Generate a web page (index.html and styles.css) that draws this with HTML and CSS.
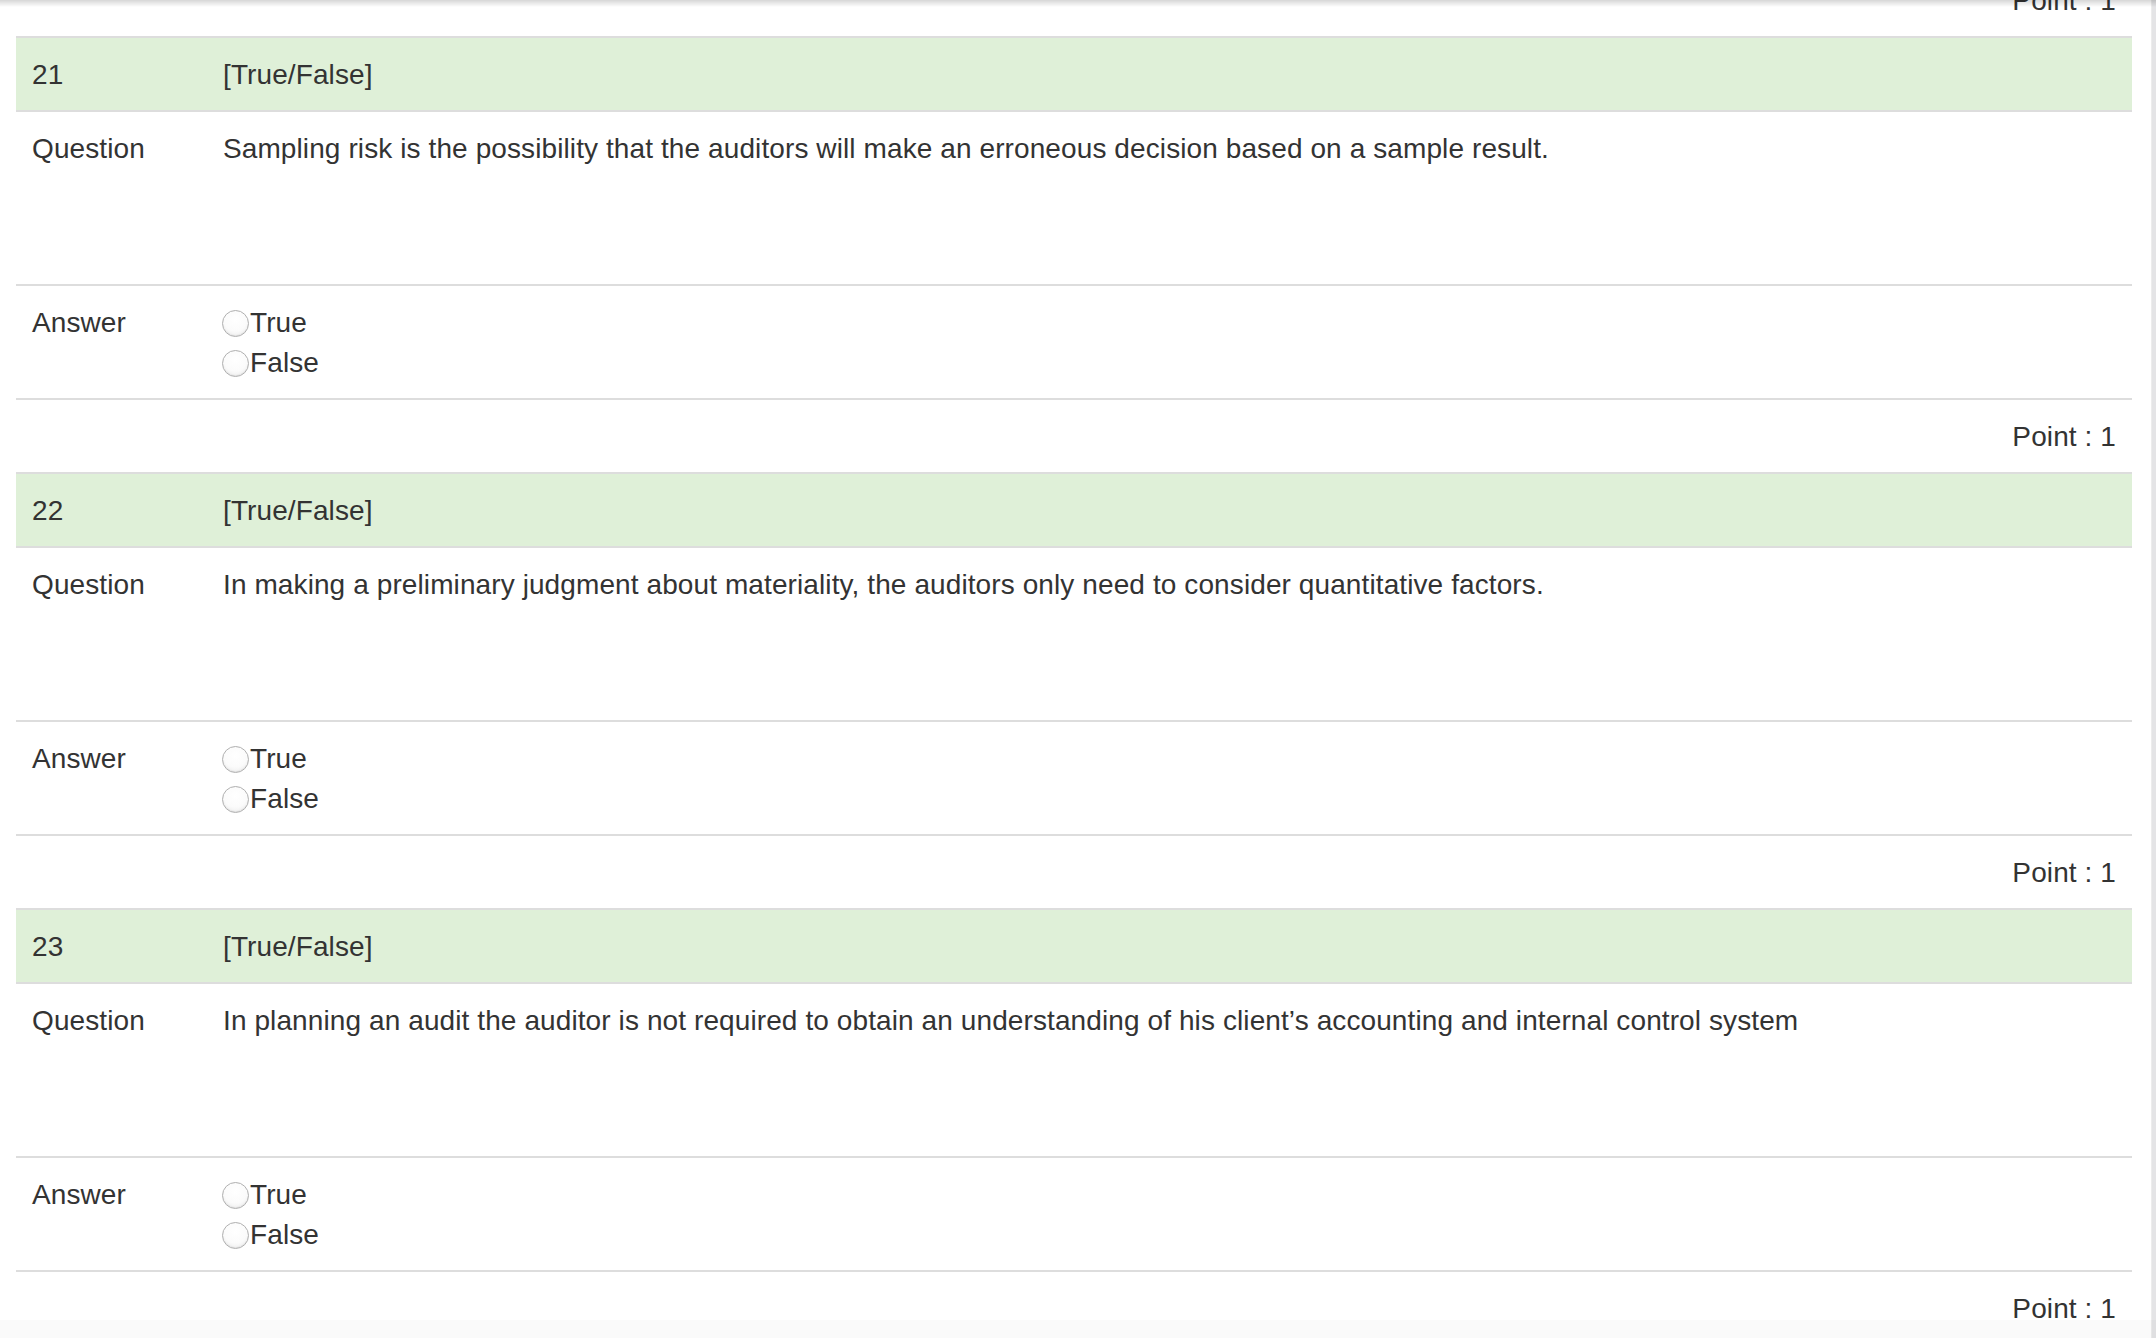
FILE: index.html
```html
<!DOCTYPE html>
<html>
<head>
<meta charset="utf-8">
<link rel="stylesheet" href="styles.css">
</head>
<body>
<div class="topshade"></div>
<div class="page">
  <div class="point first">Point : 1</div>

  <table class="qtable">
    <tr class="head"><td class="lbl">21</td><td>[True/False]</td></tr>
    <tr class="qrow"><td class="lbl">Question</td><td>Sampling risk is the possibility that the auditors will make an erroneous decision based on a sample result.</td></tr>
    <tr class="arow"><td class="lbl">Answer</td><td>
      <label class="opt"><span class="radio"></span>True</label>
      <label class="opt"><span class="radio"></span>False</label>
    </td></tr>
  </table>
  <div class="point">Point : 1</div>

  <table class="qtable">
    <tr class="head"><td class="lbl">22</td><td>[True/False]</td></tr>
    <tr class="qrow"><td class="lbl">Question</td><td>In making a preliminary judgment about materiality, the auditors only need to consider quantitative factors.</td></tr>
    <tr class="arow"><td class="lbl">Answer</td><td>
      <label class="opt"><span class="radio"></span>True</label>
      <label class="opt"><span class="radio"></span>False</label>
    </td></tr>
  </table>
  <div class="point">Point : 1</div>

  <table class="qtable">
    <tr class="head"><td class="lbl">23</td><td>[True/False]</td></tr>
    <tr class="qrow"><td class="lbl">Question</td><td>In planning an audit the auditor is not required to obtain an understanding of his client’s accounting and internal control system</td></tr>
    <tr class="arow"><td class="lbl">Answer</td><td>
      <label class="opt"><span class="radio"></span>True</label>
      <label class="opt"><span class="radio"></span>False</label>
    </td></tr>
  </table>
  <div class="point">Point : 1</div>
</div>
<div class="scrolltrack"></div>
<div class="bottomshade"></div>
</body>
</html>
```

FILE: styles.css
```css
html, body {
  margin: 0;
  padding: 0;
  background: #fff;
  overflow: hidden;
}
body {
  font-family: "Liberation Sans", Arial, sans-serif;
  font-size: 28px;
  line-height: 40px;
  letter-spacing: 0.1px;
  color: #333;
  height: 1338px;
}
.topshade {
  position: fixed;
  top: 0;
  left: 0;
  right: 0;
  height: 7px;
  background: linear-gradient(to bottom, rgba(0,0,0,0.16), rgba(0,0,0,0));
  z-index: 5;
}
.scrolltrack {
  position: fixed;
  top: 0;
  right: 0;
  width: 4px;
  height: 100%;
  background: #e4e4e6;
  border-left: 1px solid #ececec;
}
.bottomshade {
  position: fixed;
  left: 0;
  right: 0;
  bottom: 0;
  height: 18px;
  background: rgba(0,0,0,0.018);
}
.page {
  margin: -36px 24px 0 16px;
}
.qtable {
  width: 100%;
  border-collapse: collapse;
  border-spacing: 0;
}
.qtable td {
  border-top: 2px solid #ddd;
  padding: 17px 16px 15px;
  vertical-align: top;
  text-align: left;
}
.qtable td.lbl {
  width: 159px;
}
.qtable tr.head td {
  background: #dff0d8;
  border-bottom: 2px solid #ddd;
  padding-top: 17px;
  padding-bottom: 15px;
}
.qtable tr.head + tr td {
  border-top: 0;
}
.qtable tr.qrow td {
  height: 140px;
}
.qtable tr.arow td {
  border-bottom: 2px solid #ddd;
}
.opt {
  display: flex;
  align-items: center;
  height: 40px;
}
.radio {
  display: inline-block;
  width: 25px;
  height: 25px;
  border-radius: 50%;
  border: 1px solid #b0b0b0;
  background: radial-gradient(circle at 50% 35%, #ffffff 0%, #fbfbfb 55%, #e6e6e6 100%);
  box-shadow: inset 0 -1px 1px rgba(0,0,0,0.06);
  flex: none;
  margin-right: 1px;
  margin-left: -1px;
}
.point {
  text-align: right;
  padding: 17px 16px 15px;
  height: 40px;
}
```
